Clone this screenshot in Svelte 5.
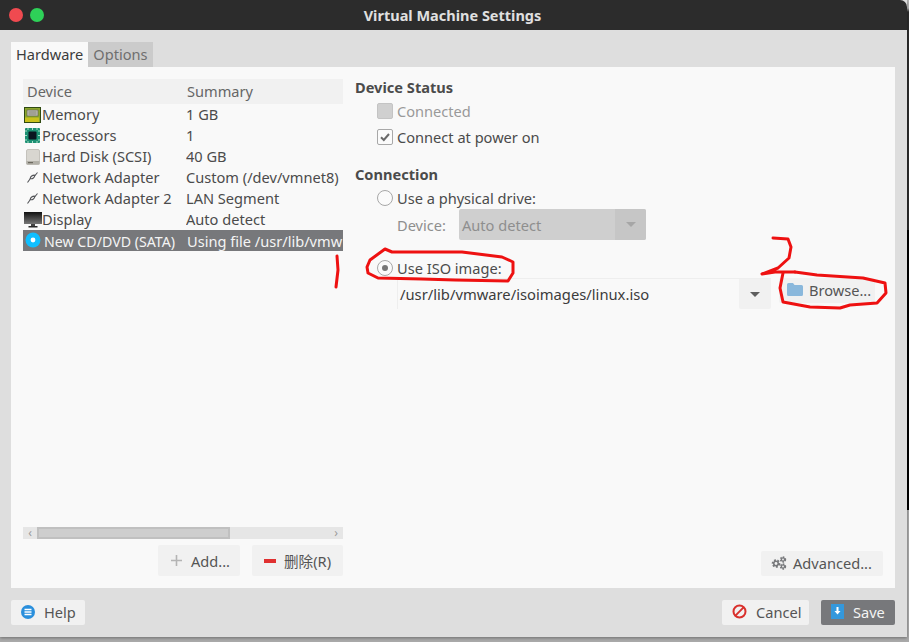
<script>
  const devices = [
    { name: "Memory", summary: "1 GB", icon: "mem" },
    { name: "Processors", summary: "1", icon: "cpu" },
    { name: "Hard Disk (SCSI)", summary: "40 GB", icon: "disk" },
    { name: "Network Adapter", summary: "Custom (/dev/vmnet8)", icon: "net" },
    { name: "Network Adapter 2", summary: "LAN Segment", icon: "net" },
    { name: "Display", summary: "Auto detect", icon: "display" },
    { name: "New CD/DVD (SATA)", summary: "Using file /usr/lib/vmw", icon: "cd", selected: true },
  ];
</script>

<div class="window">
  <header class="titlebar">
    <span class="dot red"></span>
    <span class="dot green"></span>
    <span class="title">Virtual Machine Settings</span>
  </header>

  <div class="content">
    <div class="tabs">
      <div class="tab active">Hardware</div>
      <div class="tab">Options</div>
    </div>

    <div class="panel">
      <section class="left">
        <div class="table">
          <div class="row head">
            <div class="cell-a">Device</div>
            <div class="cell-b">Summary</div>
          </div>
          {#each devices as d}
            <div class="row" class:selected={d.selected}>
              <div class="cell-a">
                <span class="ico">
                  {#if d.icon === "mem"}
                    <svg width="17" height="16" viewBox="0 0 17 16">
                      <rect x="0.5" y="0.5" width="16" height="15" fill="#8aa52c" stroke="#2f4a12" />
                      <rect x="3" y="3" width="11" height="6" fill="#bdbdb0" stroke="#5a5a4a" stroke-width="0.6" />
                      <path d="M4.5 5h8M4.5 7h8" stroke="#77776a" stroke-width="0.8" />
                      <path d="M2 10.500v4.500M4 10.500v4.500M6 10.500v4.500M8 10.500v4.500M10 10.500v4.500M12 10.500v4.500M14 10.500v4.500" stroke="#f2d414" stroke-width="1.2" />
                    </svg>
                  {:else if d.icon === "cpu"}
                    <svg width="15" height="15" viewBox="0 0 15 15">
                      <rect width="15" height="15" rx="1" fill="#1c9073" />
                      <rect x="3.5" y="3.500" width="8" height="8" rx="1" fill="#0b1420" />
                      <path d="M0 3h2M0 7.500h2M0 12h2M13 3h2M13 7.500h2M13 12h2M3 0v2M7.500 0v2M12 0v2M3 13v2M7.500 13v2M12 13v2" stroke="#a8dcc8" stroke-width="1" />
                    </svg>
                  {:else if d.icon === "disk"}
                    <svg width="14" height="16" viewBox="0 0 14 16">
                      <rect x="0.5" y="0.500" width="13" height="15" rx="1.500" fill="#d8d6d0" stroke="#c4c2bc" />
                      <rect x="0.5" y="12" width="13" height="3.500" fill="#b2b0a8" />
                      <rect x="2" y="13" width="5" height="1.200" fill="#6d6a60" />
                    </svg>
                  {:else if d.icon === "net"}
                    <svg width="13" height="13" viewBox="0 0 13 13" fill="none" stroke="#55565a">
                      <path d="M1.500 11.500L4.200 7.800M8.600 5L11.500 1.500" stroke-width="1.100" />
                      <path d="M4.200 7.600C4.400 5.600 6.400 3.900 8.800 4.200C8.800 6.400 6.600 8.400 4.200 7.600Z" stroke-width="1.100" />
                    </svg>
                  {:else if d.icon === "display"}
                    <svg width="18" height="16" viewBox="0 0 18 16">
                      <defs>
                        <linearGradient id="scr" x1="0" y1="0" x2="0" y2="1">
                          <stop offset="0" stop-color="#111" />
                          <stop offset="1" stop-color="#777" />
                        </linearGradient>
                      </defs>
                      <rect x="0" y="0" width="18" height="12" fill="url(#scr)" />
                      <rect x="7" y="12" width="4" height="2" fill="#444" />
                      <rect x="4.500" y="14" width="9" height="1.500" fill="#2a2a2a" />
                    </svg>
                  {:else}
                    <svg width="16" height="16" viewBox="0 0 16 16">
                      <circle cx="8" cy="8" r="7.500" fill="#10bfff" />
                      <circle cx="8" cy="8" r="2.400" fill="#fff" />
                    </svg>
                  {/if}
                </span>
                <span class="name">{d.name}</span>
              </div>
              <div class="cell-b">{d.summary}</div>
            </div>
          {/each}
        </div>

        <div class="scrollbar">
          <span class="chev">‹</span>
          <div class="thumb"></div>
          <span class="chev end">›</span>
        </div>

        <div class="left-actions">
          <button class="btn add">
            <svg width="11" height="11" viewBox="0 0 11 11"><path d="M5.500 0v11M0 5.500h11" stroke="#b4b4b4" stroke-width="1.600" /></svg>
            <span>Add...</span>
          </button>
          <button class="btn remove">
            <span class="minus"></span>
            <span>删除(R)</span>
          </button>
        </div>
      </section>

      <section class="right">
        <h3>Device Status</h3>
        <div class="opt disabled first"><span class="check off"></span>Connected</div>
        <div class="opt">
          <span class="check">
            <svg width="12" height="12" viewBox="0 0 12 12"><path d="M2 6.200L4.800 9L10 3" fill="none" stroke="#6a6a6a" stroke-width="2" /></svg>
          </span>Connect at power on
        </div>

        <h3 class="second">Connection</h3>
        <div class="opt physical"><span class="radio"></span>Use a physical drive:</div>
        <div class="device-row">
          <span class="dev-label">Device:</span>
          <div class="select">
            <span class="sel-text">Auto detect</span>
            <span class="sel-arrow"><i class="tri light"></i></span>
          </div>
        </div>
        <div class="opt iso"><span class="radio on"><i></i></span>Use ISO image:</div>
        <div class="path-row">
          <div class="combo">
            <span class="path">/usr/lib/vmware/isoimages/linux.iso</span>
            <span class="combo-arrow"><i class="tri"></i></span>
          </div>
          <button class="btn browse">
            <svg width="16" height="13" viewBox="0 0 16 13"><path d="M0 1.500Q0 0 1.500 0H6L7.500 2H14.500Q16 2 16 3.500V11.500Q16 13 14.500 13H1.500Q0 13 0 11.500Z" fill="#8ab8dc" /></svg>
            <span>Browse...</span>
          </button>
        </div>

        <div class="spacer"></div>
        <div class="right-actions">
          <button class="btn advanced">
            <svg width="16" height="14" viewBox="0 0 16 14" fill="#77787b">
              <circle cx="5" cy="7.500" r="3.200" stroke="#77787b" stroke-width="2.200" stroke-dasharray="1.800 1.400" fill="none" />
              <circle cx="5" cy="7.500" r="3" />
              <circle cx="12" cy="3.500" r="2.400" stroke="#77787b" stroke-width="1.600" stroke-dasharray="1.400 1.100" fill="none" />
              <circle cx="12" cy="3.500" r="2.200" />
              <circle cx="12" cy="10.500" r="2.400" stroke="#77787b" stroke-width="1.600" stroke-dasharray="1.400 1.100" fill="none" />
              <circle cx="12" cy="10.500" r="2.200" />
              <circle cx="5" cy="7.500" r="1.400" fill="#f1f1f1" />
              <circle cx="12" cy="3.500" r="0.900" fill="#f1f1f1" />
              <circle cx="12" cy="10.500" r="0.900" fill="#f1f1f1" />
            </svg>
            <span>Advanced...</span>
          </button>
        </div>
      </section>
    </div>

    <footer class="footer">
      <button class="btn help">
        <svg width="14" height="14" viewBox="0 0 14 14">
          <circle cx="7" cy="7" r="7" fill="#2a8fdc" />
          <path d="M3.500 4.500h7M3.500 7h7M3.500 9.500h7" stroke="#fff" stroke-width="1.500" />
        </svg>
        <span>Help</span>
      </button>
      <div class="footer-right">
        <button class="btn cancel">
          <svg width="15" height="15" viewBox="0 0 15 15" fill="none" stroke="#d9302c" stroke-width="2">
            <circle cx="7.500" cy="7.500" r="6" />
            <path d="M3.400 11.600L11.600 3.400" />
          </svg>
          <span>Cancel</span>
        </button>
        <button class="btn save">
          <svg width="13" height="15" viewBox="0 0 13 15">
            <rect width="13" height="15" fill="#3498dc" />
            <path d="M5.500 3h2v4h2L6.500 10.500L3.500 7h2Z" fill="#fff" />
          </svg>
          <span>Save</span>
        </button>
      </div>
    </footer>
  </div>

  <!-- red pen marks drawn over the dialog -->
  <svg class="marks" width="909" height="642" viewBox="0 0 909 642" fill="none" stroke="#ee1111" stroke-width="3" stroke-linecap="round" stroke-linejoin="round">
    <polyline points="337,256 338,270 336,287" />
    <polygon points="385,249 370,260 367,267 368,273 378,278 422,279 455,280 508,281 513,273 513,262 502,257 462,252 422,252 392,252" />
    <polyline points="773,238 788,239 791,247 789,258 778,268 762,274 775,272 795,272" />
    <polyline points="783,273 780,288 783,302 810,307 840,308 850,305 877,303 886,293 885,283 863,278 817,275 795,272" />
  </svg>
</div>

<style>
  :global(body) {
    margin: 0;
    height: 642px;
    overflow: hidden;
    background: linear-gradient(to bottom, #b5b5b5 0, #b5b5b5 8px, #2c2c2c 12px, #2c2c2c 230px, #000 230px, #000 510px, #aaa 510px);
    font-family: "Noto Sans", "Noto Sans CJK SC", sans-serif;
    font-size: 14.6px;
    color: #4b4b4b;
  }

  .window {
    width: 907px;
    height: 637px;
    background: #dedede;
    position: relative;
    box-shadow: 0 1px 3px rgba(0, 0, 0, 0.35);
  }

  .titlebar {
    height: 30px;
    background: #2c2c2c;
    display: flex;
    align-items: center;
    padding-left: 9px;
    gap: 7px;
    position: relative;
    border-radius: 0 7px 0 0;
  }

  .dot {
    width: 14px;
    height: 14px;
    border-radius: 50%;
  }
  .red { background: #f04a50; }
  .green { background: #2ed158; }

  .title {
    position: absolute;
    left: 0;
    right: 2px;
    text-align: center;
    color: #e0e0e0;
    font-weight: 700;
    font-size: 14.5px;
  }

  .content {
    padding: 12px 12px 0 11px;
    height: 607px;
    box-sizing: border-box;
    display: flex;
    flex-direction: column;
  }

  .tabs {
    display: flex;
    height: 25px;
  }
  .tab {
    padding: 0 5px;
    line-height: 25px;
    background: #cbcbcb;
    color: #6f6f6f;
  }
  .tab.active {
    background: #f9f9f9;
    color: #3c3c3c;
  }

  .panel {
    background: #f9f9f9;
    height: 521px;
    display: flex;
    box-sizing: border-box;
    padding: 12px;
  }

  .left {
    width: 320px;
    display: flex;
    flex-direction: column;
  }

  .table {
    flex: 1;
    overflow: hidden;
  }
  .row {
    display: flex;
    height: 21px;
    align-items: center;
    white-space: nowrap;
    box-sizing: border-box;
    padding-bottom: 2px;
  }
  .row .ico { margin-top: 2px; }
  .row.head {
    height: 25px;
    background: #f1f1f1;
    color: #666;
  }
  .row.head .cell-a {
    padding-left: 4px;
    width: 164px;
  }
  .row.selected {
    background: #77787b;
    color: #f4f4f4;
    padding: 1px 0 0;
  }
  .row.selected .ico { margin-top: -2px; }
  .row.selected .cell-a { width: 164px; }
  .row.selected .name { margin-left: 2px; font-size: 14.2px; }
  .cell-a {
    width: 163px;
    flex: none;
    display: flex;
    align-items: center;
    box-sizing: border-box;
  }
  .cell-b {
    flex: 1;
    overflow: hidden;
  }
  .ico {
    width: 19px;
    flex: none;
    display: flex;
    justify-content: center;
    align-items: center;
  }

  .scrollbar {
    height: 12px;
    background: #e6e6e6;
    display: flex;
    align-items: center;
    position: relative;
    margin-bottom: 6px;
  }
  .thumb {
    position: absolute;
    left: 14px;
    width: 189px;
    height: 8px;
    top: 0;
    background: #cecece;
    border: 2px solid #c0c0c0;
  }
  .chev {
    color: #9a9a9a;
    font-size: 12px;
    line-height: 12px;
    width: 14px;
    text-align: center;
  }
  .chev.end { margin-left: auto; }

  .left-actions {
    display: flex;
    justify-content: flex-end;
    gap: 12px;
  }

  .btn {
    font: inherit;
    color: #555;
    background: #f1f1f1;
    border: none;
    border-radius: 2px;
    height: 31px;
    padding: 0 10px;
    display: flex;
    align-items: center;
    gap: 9px;
    white-space: nowrap;
  }
  .btn svg { flex: none; }
  .add { width: 82px; padding-left: 13px; }
  .remove { width: 91px; padding-left: 12px; gap: 8px; }
  .minus {
    width: 12px;
    height: 4px;
    background: #e03030;
  }

  .right {
    flex: 1;
    margin-left: 12px;
    display: flex;
    flex-direction: column;
  }

  h3 {
    margin: 0;
    font-size: 14.6px;
    font-weight: 700;
    height: 18px;
    line-height: 16px;
    color: #4b4b4b;
  }
  h3.second { margin-top: 16px; }

  .opt {
    display: flex;
    align-items: center;
    gap: 4px;
    height: 26px;
    padding-left: 22px;
  }
  .opt.first { margin-top: 1px; }
  .opt.physical { margin-top: 1px; }
  .opt.disabled { color: #9a9a9a; }
  .check {
    width: 14px;
    height: 14px;
    border: 1px solid #a8a8a8;
    border-radius: 2px;
    background: #fbfbfb;
    display: flex;
    align-items: center;
    justify-content: center;
  }
  .check.off {
    background: #d0d0d0;
    border-color: #c4c4c4;
  }
  .radio {
    width: 14px;
    height: 14px;
    border: 1px solid #a8a8a8;
    border-radius: 50%;
    background: #fbfbfb;
    display: flex;
    align-items: center;
    justify-content: center;
  }
  .radio i {
    width: 6px;
    height: 6px;
    border-radius: 50%;
    background: #777;
  }

  .device-row {
    display: flex;
    align-items: center;
    padding-left: 42px;
    height: 31px;
    margin-top: -2px;
    color: #8e8e8e;
  }
  .dev-label { width: 62px; }
  .select {
    width: 187px;
    height: 31px;
    background: #cfcfcf;
    border-radius: 2px;
    display: flex;
    align-items: center;
    justify-content: space-between;
    color: #8e8e8e;
  }
  .sel-text { padding: 1px 0 0 3px; }
  .sel-arrow {
    width: 31px;
    height: 31px;
    background: #c6c6c6;
    display: flex;
    align-items: center;
    justify-content: center;
    border-radius: 0 2px 2px 0;
  }
  .tri {
    width: 0;
    height: 0;
    border-left: 5px solid transparent;
    border-right: 5px solid transparent;
    border-top: 5px solid #5e5e5e;
  }
  .tri.light { border-top-color: #a6a6a6; }

  .opt.iso { margin-top: 15px; }

  .path-row {
    display: flex;
    padding-left: 42px;
    gap: 8px;
    margin-top: -3px;
  }
  .combo {
    width: 374px;
    height: 31px;
    display: flex;
    align-items: center;
    justify-content: space-between;
    border-top: 1px solid #eeeeee;
    border-left: 1px solid #eeeeee;
    box-sizing: border-box;
  }
  .path {
    padding: 0 0 0 2px;
    font-size: 14.75px;
    color: #3c3c3c;
  }
  .combo-arrow {
    width: 32px;
    height: 100%;
    background: #f1f1f1;
    display: flex;
    align-items: center;
    justify-content: center;
    border-radius: 0 0 2px 2px;
  }
  .browse {
    width: 96px;
    height: 25px;
    gap: 6px;
    padding: 0 0 2px 8px;
  }

  .spacer { flex: 1; }
  .right-actions {
    display: flex;
    justify-content: flex-end;
  }
  .advanced {
    width: 122px;
    height: 25px;
    gap: 6px;
    padding: 0 0 2px 10px;
  }

  .footer {
    display: flex;
    justify-content: space-between;
    align-items: center;
    padding-top: 12px;
  }
  .footer-right {
    display: flex;
    gap: 12px;
  }
  .footer .btn {
    height: 25px;
    padding-bottom: 2px;
  }
  .help { width: 74px; }
  .cancel { width: 87px; }
  .footer .save {
    width: 74px;
    background: #77787b;
    color: #f4f4f4;
  }

  .marks {
    position: absolute;
    left: 0;
    top: 0;
    pointer-events: none;
  }
</style>
